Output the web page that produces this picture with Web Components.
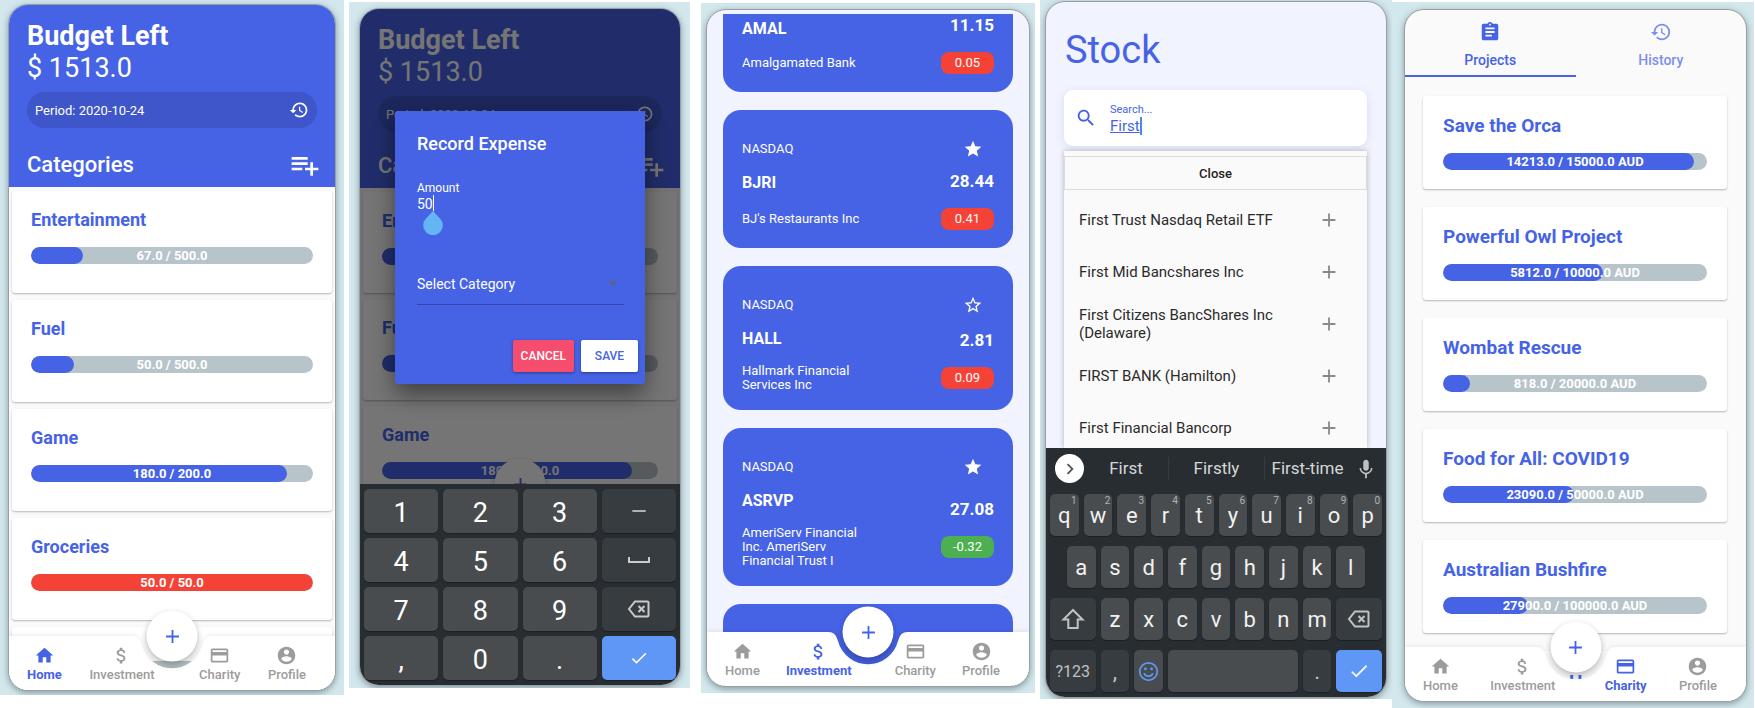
<!DOCTYPE html>
<html lang="en">
<head>
<meta charset="utf-8">
<meta name="viewport" content="width=device-width, initial-scale=1">
<title>Budget app screens</title>
<style>
  body {
    margin: 0;
    background: #fff;
    font-family: Roboto, "Liberation Sans", sans-serif;
    --brand: #4663e6;
    --teal: #d3e8ed;
    --muted: #9c9c9c;
  }
  main { display: grid; grid-template-columns: 349fr 352fr 339fr 352fr 363fr; height: 100vh; overflow: hidden; }
  phone-frame { margin: 0 5px 13px 0; padding: 4px 8px 4px; }
  #expense { margin: 2px 11px 20px 0; padding: 6px 9px 2px 10px; --card-h: 101px; --card-gap: 6px; --cats-top: 12px; }
  #stocks { margin: 3px 5px 15px 0; padding: 6px 5px; --screen: #f1f3ff; }
  #search { margin: 0 0 9px; padding: 1px 5px; --screen: #f1f3ff; }
  #charity { margin: 2px 1px 0 0; padding: 7px 7px 6px 12px; }
</style>
</head>
<body>
<main>
  <phone-frame id="home">
    <budget-home></budget-home>
    <nav-bar current="Home"></nav-bar>
  </phone-frame>
  <phone-frame id="expense">
    <budget-home dimmed></budget-home>
    <number-pad></number-pad>
    <expense-dialog slot="over"></expense-dialog>
  </phone-frame>
  <phone-frame id="stocks">
    <stock-list>
      <stock-card scrolled ticker="AMAL" price="11.15" change="0.05">Amalgamated Bank</stock-card>
      <stock-card ticker="BJRI" price="28.44" change="0.41" starred>BJ's Restaurants Inc</stock-card>
      <stock-card ticker="HALL" price="2.81" change="0.09">Hallmark Financial Services Inc</stock-card>
      <stock-card ticker="ASRVP" price="27.08" change="-0.32" starred>AmeriServ Financial Inc. AmeriServ Financial Trust I</stock-card>
      <stock-card></stock-card>
    </stock-list>
    <nav-bar current="Investment"></nav-bar>
  </phone-frame>
  <phone-frame id="search">
    <stock-search></stock-search>
    <letter-keyboard></letter-keyboard>
  </phone-frame>
  <phone-frame id="charity">
    <charity-projects></charity-projects>
    <nav-bar current="Charity"></nav-bar>
  </phone-frame>
</main>

<script>
const define = (name, render) => customElements.define(name, class extends HTMLElement {
  connectedCallback() {
    if (this.shadowRoot) return;
    const tpl = document.createElement('template');
    tpl.innerHTML = '<style>*{box-sizing:border-box}button,input,select{font:inherit;color:inherit;background:none;border:0;padding:0;margin:0;outline:0}h1,h2,h3,p,ul{margin:0;padding:0}</style>' + render(this);
    this.attachShadow({ mode: 'open' }).append(tpl.content.cloneNode(true));
  }
});

/* Icon set, 24-unit grid */
const ICONS = {
  home: '<path d="M10 20v-6h4v6h5v-8h3L12 3 2 12h3v8z"/>',
  dollar: '<path d="M11.8 10.9c-2.27-.59-3-1.2-3-2.15 0-1.09 1.01-1.85 2.7-1.85 1.78 0 2.44.85 2.5 2.1h2.21c-.07-1.72-1.12-3.3-3.21-3.81V3h-3v2.16c-1.94.42-3.5 1.68-3.5 3.61 0 2.31 1.91 3.46 4.7 4.13 2.5.6 3 1.48 3 2.41 0 .69-.49 1.79-2.7 1.79-2.06 0-2.87-.92-2.98-2.1h-2.2c.12 2.19 1.76 3.42 3.68 3.83V21h3v-2.15c1.95-.37 3.5-1.5 3.5-3.55 0-2.84-2.43-3.81-4.7-4.4z"/>',
  card: '<path d="M20 4H4c-1.11 0-1.99.89-1.99 2L2 18c0 1.11.89 2 2 2h16c1.11 0 2-.89 2-2V6c0-1.11-.89-2-2-2zm0 14H4v-6h16v6zm0-10H4V6h16v2z"/>',
  profile: '<path d="M12 2C6.48 2 2 6.48 2 12s4.48 10 10 10 10-4.48 10-10S17.52 2 12 2zm0 3c1.66 0 3 1.34 3 3s-1.34 3-3 3-3-1.34-3-3 1.34-3 3-3zm0 14.2c-2.5 0-4.71-1.28-6-3.22.03-1.99 4-3.08 6-3.08 1.99 0 5.97 1.09 6 3.08-1.29 1.94-3.5 3.22-6 3.22z"/>',
  history: '<path d="M13 3c-4.97 0-9 4.03-9 9H1l3.89 3.89.07.14L9 12H6c0-3.87 3.13-7 7-7s7 3.13 7 7-3.13 7-7 7c-1.93 0-3.68-.79-4.94-2.06l-1.42 1.42C8.27 19.99 10.51 21 13 21c4.97 0 9-4.03 9-9s-4.03-9-9-9zm-1 5v5l4.28 2.54.72-1.21-3.5-2.08V8H12z"/>',
  playlist: '<path d="M14 10H2v2h12v-2zm0-4H2v2h12V6zm4 8v-4h-2v4h-4v2h4v4h2v-4h4v-2h-4zM2 16h8v-2H2v2z"/>',
  star: '<path d="M12 17.27L18.18 21l-1.64-7.03L22 9.24l-7.19-.61L12 2 9.19 8.63 2 9.24l5.46 4.73L5.82 21z"/>',
  staroff: '<path d="M22 9.24l-7.19-.62L12 2 9.19 8.63 2 9.24l5.46 4.73L5.82 21 12 17.27 18.18 21l-1.63-7.03L22 9.24zM12 15.4l-3.76 2.27 1-4.28-3.32-2.88 4.38-.38L12 6.1l1.71 4.04 4.38.38-3.32 2.88 1 4.28L12 15.4z"/>',
  plus: '<path d="M19 13h-6v6h-2v-6H5v-2h6V5h2v6h6v2z"/>',
  search: '<path d="M15.5 14h-.79l-.28-.27C15.41 12.59 16 11.11 16 9.5 16 5.91 13.09 3 9.5 3S3 5.91 3 9.5 5.91 16 9.5 16c1.61 0 3.09-.59 4.23-1.57l.27.28v.79l5 4.99L20.49 19l-4.99-5zm-6 0C7.01 14 5 11.99 5 9.5S7.01 5 9.5 5 14 7.01 14 9.5 11.99 14 9.5 14z"/>',
  clipboard: '<path d="M19 3h-4.18C14.4 1.84 13.3 1 12 1c-1.3 0-2.4.84-2.82 2H5c-1.1 0-2 .9-2 2v14c0 1.1.9 2 2 2h14c1.1 0 2-.9 2-2V5c0-1.1-.9-2-2-2zm-7 0c.55 0 1 .45 1 1s-.45 1-1 1-1-.45-1-1 .45-1 1-1zm2 14H7v-2h7v2zm3-4H7v-2h10v2zm0-4H7V7h10v2z"/>',
  drop: '<path d="M6 9.500l6 6 6-6z"/>',
  back: '<path d="M8 4.5h12.5a1 1 0 0 1 1 1v13a1 1 0 0 1-1 1H8L2 12zM11.5 9l6 6m0-6l-6 6" fill="none" stroke="currentColor" stroke-width="2"/>',
  space: '<path d="M2 9v5h20V9" fill="none" stroke="currentColor" stroke-width="2"/>',
  check: '<path d="M9 16.17L4.83 12l-1.42 1.41L9 19 21 7l-1.41-1.41z"/>',
  minus: '<path d="M4 11h16v2H4z"/>',
  shift: '<path d="M12 3L2.5 12.5h4.8V21h9.4v-8.5h4.8z" fill="none" stroke="currentColor" stroke-width="2"/>',
  smile: '<g fill="none" stroke="currentColor" stroke-width="2"><circle cx="12" cy="12" r="10"/><path d="M7 14c1.5 4.5 8.5 4.5 10 0"/></g><circle cx="8.5" cy="9" r="1.6"/><circle cx="15.5" cy="9" r="1.6"/>',
  chevron: '<path d="M10 6L8.59 7.41 13.17 12l-4.58 4.59L10 18l6-6z"/>',
  mic: '<path d="M12 14c1.66 0 3-1.34 3-3V5c0-1.66-1.34-3-3-3S9 3.34 9 5v6c0 1.66 1.34 3 3 3zm5.3-3c0 3-2.54 5.1-5.3 5.1S6.700 14 6.700 11H5c0 3.41 2.72 6.23 6 6.72V22h2v-4.280c3.280-.48 6-3.300 6-6.720z"/>'
};
define('app-icon', el => `
  <style>:host{display:inline-flex;width:var(--size,24px);height:var(--size,24px);flex:none}svg{width:100%;height:100%;fill:currentColor}</style>
  <svg viewBox="0 0 24 24" aria-hidden="true">${ICONS[el.getAttribute('name')]}</svg>`);

define('phone-frame', () => `
  <style>
    :host{display:block;min-width:0;background:var(--teal);overflow:hidden;box-sizing:border-box}
    .phone{position:relative;display:flex;flex-direction:column;height:100%;overflow:hidden;border:1px solid #9a9fa0;border-radius:20px;background:var(--screen,#fafafa);box-shadow:0 2px 6px rgba(60,80,90,.5)}
  </style>
  <section class="phone"><slot></slot><slot name="over"></slot></section>`);

define('progress-meter', el => `
  <style>
    :host{display:grid;height:17px;border-radius:9px;overflow:hidden;background:#b7c5ca;color:#fff;font-weight:700;font-size:13px;line-height:17px;text-align:center}
    .fill,span{grid-area:1/1}
    .fill{width:${el.getAttribute('fill')}%;border-radius:9px;background:var(--bar,var(--brand))}
  </style>
  <div class="fill"></div><span><slot></slot></span>`);

define('goal-card', el => `
  <style>
    :host{display:block;flex:none;height:var(--card-h,102px);padding:var(--card-pad,18px 19px);box-sizing:border-box;background:#fff;border-radius:3px;box-shadow:0 1px 2px rgba(0,0,0,.28)}
    h3{color:var(--brand);font-size:var(--title,18px);line-height:22px;font-weight:700;white-space:nowrap}
    progress-meter{margin-top:16px;${el.hasAttribute('full') ? '--bar:#f44336' : ''}}
  </style>
  <h3>${el.getAttribute('name')}</h3>
  <progress-meter fill="${el.getAttribute('fill')}">${el.getAttribute('amount')}</progress-meter>`);

const fabCss = `.fab{position:absolute;left:50%;top:0;transform:translate(-50%,-50%);width:51px;height:51px;border-radius:50%;background:#fff;color:var(--brand);box-shadow:0 3px 6px rgba(0,0,0,.3);display:flex;align-items:center;justify-content:center;--size:22px}`;

define('nav-bar', el => {
  const items = [['Home', 'home'], ['Investment', 'dollar'], ['Charity', 'card'], ['Profile', 'profile']];
  return `
  <style>
    :host{display:block;position:relative;flex:none;height:54px}
    .shape{position:absolute;inset:0;display:flex;filter:drop-shadow(0 -1px 2px rgba(0,0,0,.08))}
    .shape i{flex:1;background:#fff}
    .shape svg{width:80px;height:54px;fill:#fff;flex:none;margin:0 -1px}
    ${fabCss}
    nav{position:relative;display:flex;justify-content:space-between;padding:9px 29px 0 18px;color:var(--muted)}
    a{display:flex;flex-direction:column;align-items:center;color:inherit;text-decoration:none;font-size:13px;line-height:18px;font-weight:500;--size:21px}
    a:nth-child(3){margin-left:17px}
    a[aria-current]{color:var(--brand);font-weight:700}
  </style>
  <div class="shape"><i></i><svg viewBox="0 0 80 54"><path d="M0 0C6 0 8 3 10 9A31 31 0 0 0 70 9C72 3 74 0 80 0V54H0z"/></svg><i></i></div>
  <nav>${items.map(([t, i]) => `<a href="#${t}"${el.getAttribute('current') === t ? ' aria-current="page"' : ''}><app-icon name="${i}"></app-icon>${t}</a>`).join('')}</nav>
  <button class="fab" aria-label="Add"><app-icon name="plus"></app-icon></button>`;
});

define('budget-home', el => `
  <style>
    :host{display:flex;flex-direction:column;flex:1;min-height:0;overflow:hidden;position:relative;margin-bottom:-54px}
    :host([dimmed]){margin-bottom:0}
    header{flex:none;background:var(--brand);color:#fff;padding:16px 18px 0}
    h1{font-size:27px;line-height:31px;font-weight:700}
    .sum{font-size:27px;line-height:33px}
    .period{display:flex;align-items:center;justify-content:space-between;height:36px;margin-top:7px;padding:0 8px;border-radius:18px;background:#3e56c9;font-size:13px;--size:20px}
    .cats{display:flex;align-items:center;justify-content:space-between;height:44px;margin-top:var(--cats-top,15px);--size:32px}
    h2{font-size:22px;line-height:30px;font-weight:500}
    .cats button{display:flex;margin-right:-4px}
    .list{display:flex;flex-direction:column;gap:var(--card-gap,7px);padding:4px 3px}
    .scrim{position:absolute;inset:0;background:rgba(0,0,0,.54)}
    ${fabCss}.fab{top:100%}
  </style>
  <header>
    <h1>Budget Left</h1><p class="sum">$ 1513.0</p>
    <div class="period"><span>Period: 2020-10-24</span><app-icon name="history"></app-icon></div>
    <div class="cats"><h2>Categories</h2><button aria-label="Add category"><app-icon name="playlist"></app-icon></button></div>
  </header>
  <div class="list">
    <goal-card name="Entertainment" fill="18.5" amount="67.0 / 500.0"></goal-card>
    <goal-card name="Fuel" fill="15.4" amount="50.0 / 500.0"></goal-card>
    <goal-card name="Game" fill="90.7" amount="180.0 / 200.0"></goal-card>
    ${el.hasAttribute('dimmed') ? '' : '<goal-card name="Groceries" fill="100" full amount="50.0 / 50.0"></goal-card><goal-card name="" fill="0" amount=""></goal-card>'}
  </div>
  ${el.hasAttribute('dimmed') ? '<button class="fab" aria-label="Add"><app-icon name="plus"></app-icon></button><div class="scrim"></div>' : ''}`);

define('expense-dialog', () => `
  <style>
    :host{position:absolute;left:35px;right:35px;top:102px;background:var(--brand);color:#fff;border-radius:3px;box-shadow:0 10px 22px rgba(0,0,0,.45)}
    form{padding:22px 7px 12px 22px}
    h2{font-size:18px;line-height:22px;font-weight:500}
    .amount{display:block;margin-top:26px;font-size:12px;line-height:14px}
    .value{display:flex;position:relative;font-size:14px;line-height:18px}
    input{width:16px;height:18px}
    .value i{width:1px;height:16px;background:#fff}
    .value svg{position:absolute;left:6px;top:16px;width:20px;height:24px;fill:#64b5f6}
    .pick{display:flex;align-items:center;position:relative;margin:59px 14px 0 0;height:33px;border-bottom:1px solid #3547a8;--size:20px}
    select{appearance:none;width:100%;font-size:14px;line-height:20px;padding-bottom:8px}
    .pick app-icon{position:absolute;right:1px;top:1px;color:#5a618e}
    .actions{display:flex;justify-content:flex-end;gap:7px;margin-top:35px}
    button{height:32px;padding:0 8px;min-width:57px;border-radius:2px;font-size:12px;font-weight:500;box-shadow:0 1px 3px rgba(0,0,0,.4)}
    .cancel{background:#f64c6e}.save{background:#fff;color:var(--brand)}
  </style>
  <form>
    <h2>Record Expense</h2>
    <label class="amount" for="amt">Amount</label>
    <div class="value"><input id="amt" value="50" inputmode="decimal"><i></i><svg viewBox="0 0 20 24"><path d="M10 0L17 7.5A9.800 9.800 0 1 1 3 7.5z"/></svg></div>
    <div class="pick"><select aria-label="Category"><option>Select Category</option></select><app-icon name="drop"></app-icon></div>
    <div class="actions"><button type="button" class="cancel">CANCEL</button><button type="button" class="save">SAVE</button></div>
  </form>`);

define('number-pad', () => {
  const icon = (n, s, l) => `<button class="dark" aria-label="${l}" style="--size:${s}px"><app-icon name="${n}"></app-icon></button>`;
  const keys = t => t.split(' ').map(k => `<button>${k}</button>`).join('');
  return `
  <style>
    :host{display:grid;flex:none;grid-template-columns:repeat(4,1fr);grid-auto-rows:44px;gap:5px;padding:5px 4px;background:#282d31;color:#fff}
    button{display:flex;align-items:center;justify-content:center;border-radius:5px;background:#484c4f;font-size:27px;box-shadow:0 1px 1px rgba(0,0,0,.3)}
    button:not(.dark,.go){padding-top:4px}
    .dark{background:#373c40;color:#c8cacc}
    .go{background:#5e97f6;--size:20px}
  </style>
  ${keys('1 2 3')}${icon('minus', 20, 'Minus')}${keys('4 5 6')}${icon('space', 24, 'Space')}${keys('7 8 9')}${icon('back', 24, 'Delete')}${keys(', 0 .')}
  <button class="go" aria-label="Done"><app-icon name="check"></app-icon></button>`;
});

define('stock-list', () => `
  <style>
    :host{display:block;flex:1;min-height:0;overflow:hidden;margin:4px 16px -54px}
    .list{display:flex;flex-direction:column;gap:18px}
  </style>
  <div class="list"><slot></slot></div>`);

define('stock-card', el => {
  const change = el.getAttribute('change') || '';
  if (!el.hasAttribute('ticker')) return '<style>:host{display:block;flex:none;height:138px;border-radius:18px;background:var(--brand)}</style>';
  /* a scrolled card starts at its ticker: its first row is already above the list */
  const scrolled = el.hasAttribute('scrolled');
  return `
  <style>
    :host{display:flex;flex:none;justify-content:space-between;padding:28px 19px 8px;border-radius:18px;background:var(--brand);color:#fff;font-size:13px;line-height:14px}
    :host([scrolled]){padding-top:0;border-radius:0 0 18px 18px}
    .left{display:flex;flex-direction:column;width:124px;padding:4px 0 10px}
    h3{font-size:16px;line-height:22px;font-weight:700;margin:16px 0 14px}
    :host([scrolled]) h3{margin:0 0 12px}
    .name{display:flex;align-items:center;min-height:22px}
    .right{display:flex;flex-direction:column;align-items:flex-end;--size:20px}
    .star{display:flex;height:22px;align-items:center;margin-right:11px}
    .figures{flex:1;display:flex;flex-direction:column;justify-content:center;gap:16px;text-align:right}
    :host([scrolled]) .figures{padding-bottom:10px}
    .price{font-size:17px;line-height:22px;font-weight:700}
    .change{width:53px;border-radius:8px;line-height:22px;text-align:center;background:${change.startsWith('-') ? '#4caf50' : '#f44336'}}
  </style>
  <div class="left">${scrolled ? '' : '<span>NASDAQ</span>'}<h3>${el.getAttribute('ticker')}</h3><span class="name"><slot></slot></span></div>
  <div class="right">${scrolled ? '' : `<button class="star" aria-label="Favourite"><app-icon name="${el.hasAttribute('starred') ? 'star' : 'staroff'}"></app-icon></button>`}
    <div class="figures"><span class="price">${el.getAttribute('price')}</span><span class="change">${change}</span></div></div>`;
});

define('stock-search', () => `
  <style>
    :host{display:flex;flex-direction:column;flex:1;min-height:0;overflow:hidden;padding:24px 19px 0 18px;color:#2b2b2b}
    h1{color:var(--brand);font-size:38px;line-height:48px;font-weight:400;padding-left:1px}
    .box{flex:none;display:flex;align-items:center;gap:13px;height:56px;margin-top:16px;padding:0 11px;border-radius:9px;background:#fff;color:var(--brand);box-shadow:0 2px 8px rgba(70,90,160,.14);--size:22px}
    .field{display:flex;flex-direction:column}
    label{font-size:11px;line-height:15px}
    .value{display:flex;align-items:center;font-size:15px;line-height:18px}
    input{width:30px;text-decoration:underline;height:18px}
    .value i{width:2px;height:18px;background:#4b84f0}
    .results{flex:1;min-height:0;margin-top:5px;padding-top:5px;background:#fafafa;box-shadow:0 0 5px rgba(0,0,0,.28)}
    .close{display:block;width:100%;height:34px;border:1px solid #dcdcdc;font-size:13px;font-weight:500;color:#222}
    ul{list-style:none;padding-top:4px}
    li{display:flex;align-items:center;justify-content:space-between;height:52px;padding:0 27px 0 15px;font-size:15px;line-height:18px}
    li button{display:flex;color:#8a8a8a;--size:22px;flex:none}
  </style>
  <h1>Stock</h1>
  <div class="box"><app-icon name="search"></app-icon><div class="field"><label for="q">Search...</label><div class="value"><input id="q" value="First"><i></i></div></div></div>
  <div class="results">
    <button class="close">Close</button>
    <ul>${['First Trust Nasdaq Retail ETF', 'First Mid Bancshares Inc', 'First Citizens BancShares Inc<br>(Delaware)', 'FIRST BANK (Hamilton)', 'First Financial Bancorp'].map(t => `<li><span>${t}</span><button aria-label="Add"><app-icon name="plus"></app-icon></button></li>`).join('')}</ul>
  </div>`);

define('letter-keyboard', () => {
  const keys = (t, nums) => [...t].map((k, i) => `<button${t[0] === 'a' && !i ? ' class="first"' : ''}>${k}${nums ? `<sup>${(i + 1) % 10}</sup>` : ''}</button>`).join('');
  return `
  <style>
    :host{display:block;flex:none;background:#282d31;color:#f2f2f2;padding:5px 4px}
    .bar{display:flex;align-items:center;height:31px;padding:0 5px;font-size:17px;color:#d5d7d8}
    .more{width:29px;height:29px;border-radius:50%;background:#fff;color:#555;display:flex;align-items:center;justify-content:center;--size:22px}
    .words{flex:1;display:grid;grid-template-columns:84px 1fr 86px;padding:0 5px 0 0;text-align:center}
    .words button{height:23px;line-height:23px;white-space:nowrap}
    .words button+button{border-left:1px solid #363b3f}
    .mic{display:flex;--size:22px;color:#bdbfc1}
    .keys{display:grid;grid-template-columns:repeat(20,1fr);grid-auto-rows:42px;gap:10px 5px;margin-top:10px}
    .keys button{grid-column:span 2;position:relative;display:flex;align-items:center;justify-content:center;min-width:0;border-radius:5px;background:#484c4f;font-size:22px;box-shadow:0 1px 1px rgba(0,0,0,.3)}
    .keys .first{grid-column:2/span 2}
    .keys .wide{grid-column:span 3}
    .keys .shift{grid-column:1/span 3}
    .keys .bar8{grid-column:span 8}
    .keys .dark{background:#373c40;color:#c0c2c4;--size:24px}
    .keys .txt{font-size:16px}
    .keys .emoji{color:#5e97f6;--size:21px}
    .keys .go{background:#5e97f6;--size:22px}
    sup{position:absolute;right:2px;top:1px;font-size:10px;line-height:12px;color:#b0b2b4}
  </style>
  <div class="bar"><button class="more" aria-label="More"><app-icon name="chevron"></app-icon></button>
    <div class="words"><button>First</button><button>Firstly</button><button>First-time</button></div>
    <button class="mic" aria-label="Voice input"><app-icon name="mic"></app-icon></button></div>
  <div class="keys">${keys('qwertyuiop', true)}${keys('asdfghjkl')}
    <button class="dark shift" aria-label="Shift"><app-icon name="shift"></app-icon></button>${keys('zxcvbnm')}<button class="dark wide" aria-label="Delete"><app-icon name="back"></app-icon></button>
    <button class="dark shift txt">?123</button><button class="dark">,</button><button class="emoji" aria-label="Emoji"><app-icon name="smile"></app-icon></button><button class="bar8" aria-label="Space"></button><button class="dark">.</button><button class="go wide" aria-label="Done"><app-icon name="check"></app-icon></button>
  </div>`;
});

define('charity-projects', () => `
  <style>
    :host{display:flex;flex-direction:column;flex:1;min-height:0;overflow:hidden;margin-bottom:-54px;--card-h:93px;--card-pad:19px 20px;--title:19px}
    .tabs{display:flex;flex:none}
    .tabs button{flex:1;display:flex;flex-direction:column;align-items:center;gap:7px;height:67px;padding-top:11px;color:#7c90ea;font-size:14px;line-height:20px;font-weight:500;border-bottom:2px solid transparent;--size:22px}
    .tabs .on{color:var(--brand);border-color:var(--brand)}
    .list{display:flex;flex-direction:column;gap:18px;padding:19px 19px 18px 18px}
    .next{flex:none;height:93px;padding:20px 0 0 48%;background:#fff;color:var(--brand);font-size:19px;line-height:22px;font-weight:700}
  </style>
  <div class="tabs" role="tablist"><button class="on" role="tab" aria-selected="true"><app-icon name="clipboard"></app-icon>Projects</button><button role="tab" aria-selected="false"><app-icon name="history"></app-icon>History</button></div>
  <div class="list">
    <goal-card name="Save the Orca" fill="95" amount="14213.0 / 15000.0 AUD"></goal-card>
    <goal-card name="Powerful Owl Project" fill="60.5" amount="5812.0 / 10000.0 AUD"></goal-card>
    <goal-card name="Wombat Rescue" fill="10.3" amount="818.0 / 20000.0 AUD"></goal-card>
    <goal-card name="Food for All: COVID19" fill="49.5" amount="23090.0 / 50000.0 AUD"></goal-card>
    <goal-card name="Australian Bushfire" fill="32.3" amount="27900.0 / 100000.0 AUD"></goal-card>
    <div class="next">Hei</div>
  </div>`);
</script>
</body>
</html>
